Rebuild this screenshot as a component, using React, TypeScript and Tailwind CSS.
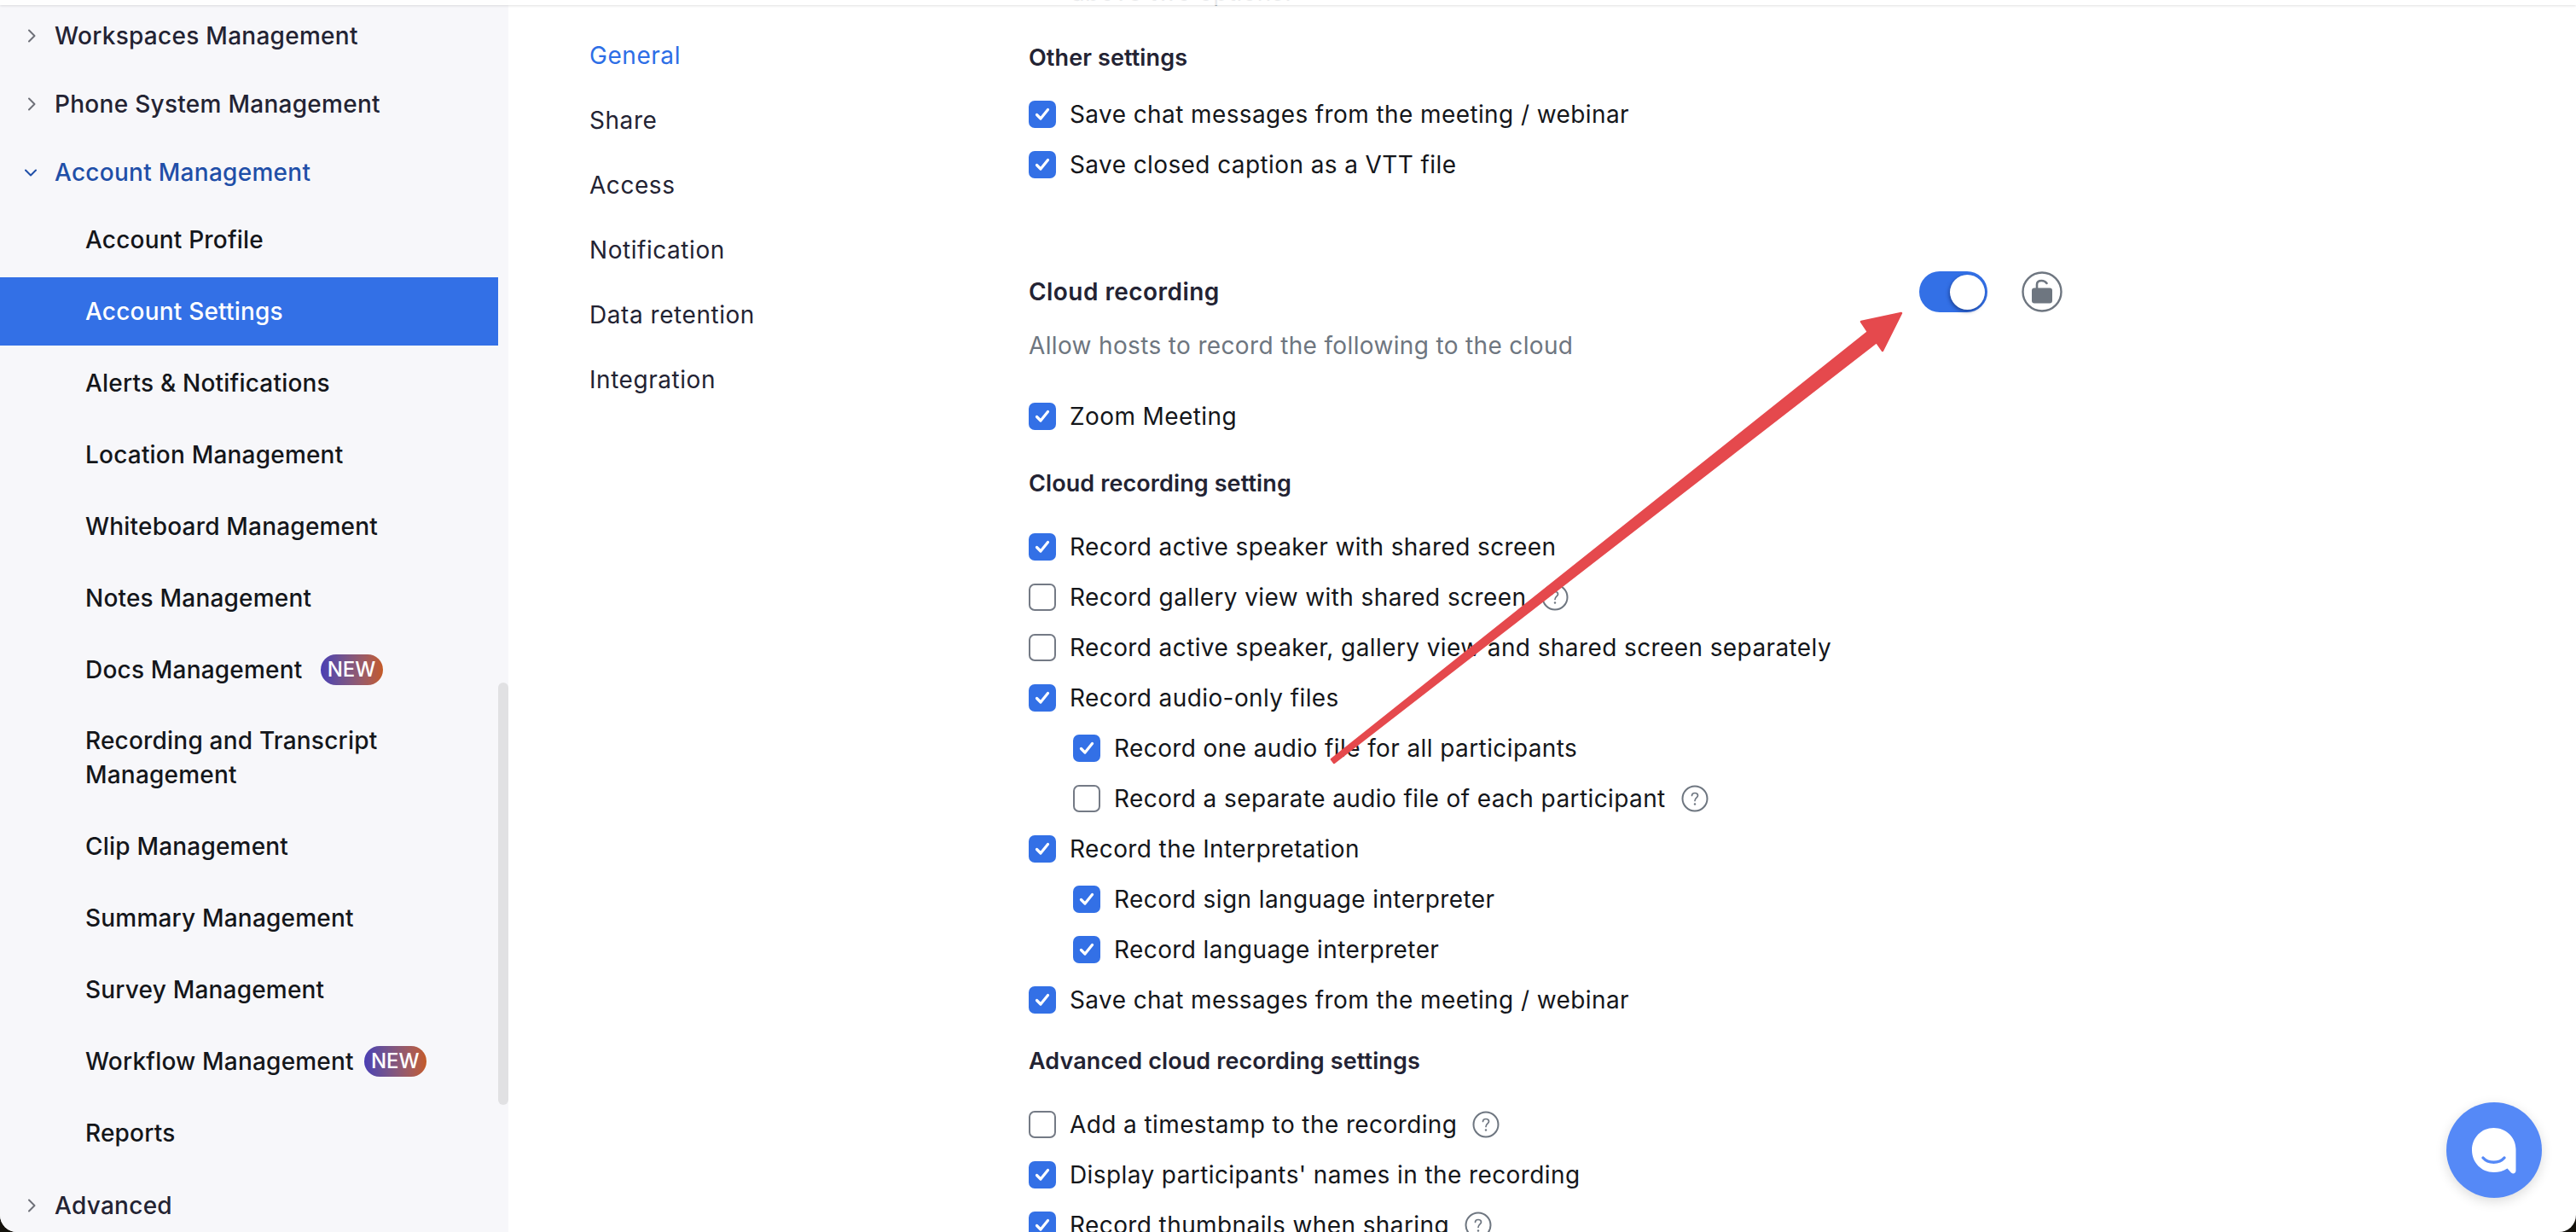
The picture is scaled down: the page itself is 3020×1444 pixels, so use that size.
const font = { fontFamily: "Inter, 'Noto Sans', sans-serif" };

function Chevron({ open }: { open?: boolean }) {
  return (
    <svg width="16" height="16" viewBox="0 0 16 16" fill="none" className="shrink-0">
      {open ? (
        <path d="M1 5.5 L7 11.5 L13 5.5" stroke="#1f4fa8" strokeWidth="2" strokeLinecap="round" strokeLinejoin="round" />
      ) : (
        <path d="M5 1.5 L11.5 8 L5 14.5" stroke="#6e7078" strokeWidth="2" strokeLinecap="round" strokeLinejoin="round" />
      )}
    </svg>
  );
}

function NewBadge({ className }: { className: string }) {
  return (
    <span
      className={
        "flex h-[36px] w-[73px] items-center justify-center rounded-full bg-gradient-to-r from-[#4a3db4] to-[#c45a24] text-[24px] font-medium tracking-normal text-white " +
        className
      }
    >
      NEW
    </span>
  );
}

function TopItem({ label, open }: { label: string; open?: boolean }) {
  return (
    <div className="flex h-[80px] items-center pl-[29px]">
      <div className="w-[35px]">
        <Chevron open={open} />
      </div>
      <span
        className={
          open
            ? "text-[28px] font-medium tracking-[0.28px] text-[#1f4fa8]"
            : "text-[28px] font-medium tracking-[0.28px] text-[#232333]"
        }
      >
        {label}
      </span>
    </div>
  );
}

function SubItem({ label, active, badge }: { label: string; active?: boolean; badge?: string }) {
  return (
    <div
      className={
        active
          ? "mt-[4px] flex h-[80px] w-[584px] items-center bg-[#3370e6] pl-[100px] text-[28px] font-medium tracking-[0.2px] text-white"
          : "mt-[4px] flex h-[80px] w-[584px] items-center pl-[100px] text-[28px] font-medium tracking-[0.2px] text-[#14161a]"
      }
    >
      {label}
      {badge && <NewBadge className={badge} />}
    </div>
  );
}

function Sidebar() {
  return (
    <aside className="relative h-full w-[596px] shrink-0 bg-[#f7f7fa] pt-[2px]">
      <TopItem label="Workspaces Management" />
      <TopItem label="Phone System Management" />
      <TopItem label="Account Management" open />
      <div className="-mt-[5px]">
        <SubItem label="Account Profile" />
        <SubItem label="Account Settings" active />
        <SubItem label="Alerts & Notifications" />
        <SubItem label="Location Management" />
        <SubItem label="Whiteboard Management" />
        <SubItem label="Notes Management" />
        <SubItem label="Docs Management" badge="ml-[21px]" />
      </div>
      <div className="mt-[3px] w-[584px] py-[20px] pl-[100px] text-[28px] leading-[40px] font-medium tracking-[0.2px] text-[#14161a]">
        Recording and Transcript
        <br />
        Management
      </div>
      <SubItem label="Clip Management" />
      <SubItem label="Summary Management" />
      <SubItem label="Survey Management" />
      <SubItem label="Workflow Management" badge="ml-[12px]" />
      <SubItem label="Reports" />
      <div className="mt-[5px]">
        <TopItem label="Advanced" />
      </div>
      <div className="absolute top-[800px] right-0 h-[495px] w-[12px] rounded-full bg-[#e1e1e3]" />
    </aside>
  );
}

function SideTabs() {
  const tabs = ["General", "Share", "Access", "Notification", "Data retention", "Integration"];
  return (
    <nav className="w-[610px] shrink-0 pt-[27px] pl-[95px]">
      {tabs.map((t, i) => (
        <div
          key={t}
          className={
            i === 0
              ? "flex h-[76px] items-start text-[28px] leading-[76px] tracking-[0.55px] text-[#2d6ee6]"
              : "flex h-[76px] items-start text-[28px] leading-[76px] tracking-[0.55px] text-[#232333]"
          }
        >
          {t}
        </div>
      ))}
    </nav>
  );
}

function Help() {
  return (
    <svg width="32" height="32" viewBox="0 0 32 32" fill="none" className="ml-[18px] shrink-0">
      <circle cx="16" cy="16" r="14.5" stroke="#6e7680" strokeWidth="2" />
      <path
        d="M12.5 12.5 C12.5 10.4 14 9.5 16 9.5 C18 9.5 19.5 10.6 19.5 12.4 C19.5 14.8 16 15 16 18.5"
        stroke="#6e7680"
        strokeWidth="1.7"
        strokeLinecap="round"
      />
      <circle cx="16" cy="22.5" r="1.2" fill="#6e7680" />
    </svg>
  );
}

function Box({ checked }: { checked?: boolean }) {
  if (!checked) {
    return <span className="h-[32px] w-[32px] shrink-0 rounded-[7px] border-2 border-[#747a85] bg-white" />;
  }
  return (
    <span className="flex h-[32px] w-[32px] shrink-0 items-center justify-center rounded-[7px] bg-[#3370e6]">
      <svg width="20" height="18" viewBox="0 0 20 18" fill="none">
        <path d="M3.5 9.5 L8 14 L16.5 3.5" stroke="white" strokeWidth="3.2" strokeLinecap="round" strokeLinejoin="round" />
      </svg>
    </span>
  );
}

function Check({ label, checked, help, nested }: { label: string; checked?: boolean; help?: boolean; nested?: boolean }) {
  return (
    <div className={nested ? "flex h-[59px] items-center pl-[52px]" : "flex h-[59px] items-center"}>
      <Box checked={checked} />
      <span className="ml-[16px] text-[28px] tracking-[0.4px] whitespace-nowrap text-[#14161a]">{label}</span>
      {help && <Help />}
    </div>
  );
}

function Heading({ label, className }: { label: string; className?: string }) {
  return (
    <div className={"text-[27px] leading-[40px] font-semibold tracking-[0.1px] text-[#232333] " + (className ?? "")}>
      {label}
    </div>
  );
}

function Toggle() {
  return (
    <div className="flex h-[48px] w-[80px] items-center justify-end rounded-full bg-[#3370e6] pr-[3px]">
      <div className="h-[41px] w-[41px] rounded-full bg-white shadow-[-1px_2px_4px_rgba(10,30,90,0.55)]" />
    </div>
  );
}

function LockBadge() {
  return (
    <svg width="48" height="48" viewBox="0 0 48 48" fill="none" className="ml-[40px]">
      <circle cx="24" cy="24" r="22.5" stroke="#6e7680" strokeWidth="2.4" />
      <path d="M18 20 V15.5 C18 12.5 20.5 11 23.5 11 C26 11 28 12 29.5 14" stroke="#6e7680" strokeWidth="2.6" strokeLinecap="round" />
      <rect x="12" y="19.5" width="24" height="18" rx="3" fill="#6e7680" />
    </svg>
  );
}

function Content() {
  return (
    <section className="w-[1300px] -mt-[29px]">
      <div className="ml-[50px] text-[28px] leading-[40px] tracking-[0.4px] text-[#6e7680]">above two options.</div>
      <Heading label="Other settings" className="mt-[37px]" />
      <div className="mt-[16px]">
        <Check label="Save chat messages from the meeting / webinar" checked />
        <Check label="Save closed caption as a VTT file" checked />
      </div>
      <div className="mt-[96px] flex w-[1212px] items-center">
        <div className="flex-1 text-[28px] leading-[48px] font-semibold tracking-[0.45px] text-[#232333]">Cloud recording</div>
        <Toggle />
        <LockBadge />
      </div>
      <div className="mt-[19px] text-[28px] leading-[40px] tracking-[0.35px] text-[#6e7680]">
        Allow hosts to record the following to the cloud
      </div>
      <div className="mt-[33px]">
        <Check label="Zoom Meeting" checked />
      </div>
      <Heading label="Cloud recording setting" className="mt-[30px]" />
      <div className="mt-[24px]">
        <Check label="Record active speaker with shared screen" checked />
        <Check label="Record gallery view with shared screen" help />
        <Check label="Record active speaker, gallery view and shared screen separately" />
        <Check label="Record audio-only files" checked />
        <Check label="Record one audio file for all participants" checked nested />
        <Check label="Record a separate audio file of each participant" help nested />
        <Check label="Record the Interpretation" checked />
        <Check label="Record sign language interpreter" checked nested />
        <Check label="Record language interpreter" checked nested />
        <Check label="Save chat messages from the meeting / webinar" checked />
      </div>
      <Heading label="Advanced cloud recording settings" className="mt-[23px]" />
      <div className="mt-[24px]">
        <Check label="Add a timestamp to the recording" help />
        <Check label="Display participants' names in the recording" checked />
        <Check label="Record thumbnails when sharing" checked help />
      </div>
    </section>
  );
}

function ChatButton() {
  return (
    <div className="absolute top-[1292px] left-[2868px] flex h-[112px] w-[112px] items-center justify-center rounded-full bg-[#5589f7] shadow-[0_4px_14px_rgba(0,0,0,0.14)]">
      <svg width="54" height="56" viewBox="0 0 54 56" fill="none" className="mt-[2px]">
        <path
          d="M26.5 1 C41 1 52.5 12 52.5 26 V51 C52.5 54 49.5 55.5 47 53.5 L42.5 48.5 C38 51.5 32.5 53 26.5 53 C12 53 1 41.5 1 27 C1 12.5 12 1 26.5 1 Z"
          fill="white"
        />
        <path d="M14 36 C20 43 33 43 39 36" stroke="#5589f7" strokeWidth="3.4" strokeLinecap="round" />
      </svg>
    </div>
  );
}

// red annotation arrow pasted over the screenshot
function Arrow() {
  return (
    <svg width="3020" height="1444" viewBox="0 0 3020 1444" className="pointer-events-none absolute top-0 left-0">
      <path
        d="M1561 890 L1564 894 L2200 401 L2207 411 L2229 367 L2182 377 L2190 389 Z"
        fill="#e5494d"
        stroke="#e5494d"
        strokeWidth="2.5"
        strokeLinejoin="round"
      />
    </svg>
  );
}

export default function App() {
  return (
    <div className="h-[1444px] w-[3020px] overflow-hidden bg-[#14120c]" style={font}>
      <div className="relative h-full w-full overflow-hidden rounded-b-[20px] bg-white">
        <div className="flex h-full">
          <Sidebar />
          <SideTabs />
          <Content />
        </div>
        <div className="absolute top-0 left-0 h-[6px] w-full bg-white/85 shadow-[0_1px_3px_rgba(0,0,0,0.12)]" />
        <Arrow />
        <ChatButton />
      </div>
    </div>
  );
}
